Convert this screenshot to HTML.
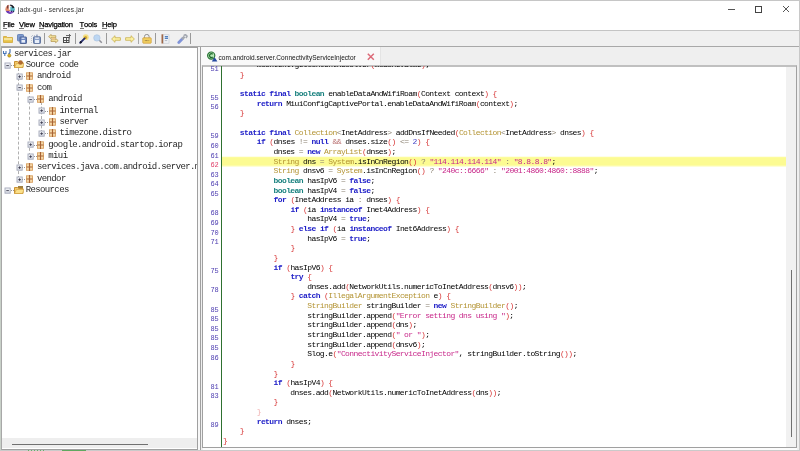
<!DOCTYPE html>
<html><head><meta charset="utf-8">
<style>
*{box-sizing:border-box}
html,body{margin:0;padding:0;width:800px;height:451px;overflow:hidden;background:#fff;position:relative}
#root{position:absolute;left:0;top:0;width:800px;height:451px;will-change:transform}
.a{position:absolute}
.sans{font-family:"Liberation Sans",sans-serif}
#title{left:18px;top:5px;font-size:6.5px;letter-spacing:0.2px;line-height:10px;color:#2a2a2a;white-space:pre}
#menu span{position:absolute;top:20px;font-size:7.6px;letter-spacing:-0.2px;line-height:10px;color:#000;white-space:pre;-webkit-text-stroke:0.25px #000}
#menu u{text-decoration:none;position:relative}
#menu u:after{content:"";position:absolute;left:0;right:0;top:8px;height:1px;background:#777}
#toolbar{left:1px;top:30px;width:798px;height:17px;background:#f0f0f0;border-top:1px solid #c4c4c4;border-bottom:1px solid #a8a8a8}
.sep{position:absolute;top:33px;width:1px;height:11px;background:#9a9a9a}
#left{left:1px;top:47px;width:197px;height:403px;border:1px solid #a0a0a0;border-left:1px solid #a8a8a8;background:#fff}
#divider{left:198px;top:47px;width:2px;height:404px;background:#f8f8f8}
#right{left:200px;top:47px;width:599px;height:404px;border-left:1px solid #a0a0a0;background:#efefef}
#editor{left:202px;top:65px;width:595px;height:383px;border:1px solid #a0a0a0;border-top:2px solid #c0c0c0;background:#fff}
#treeclip{left:0;top:0;width:197px;height:437px;overflow:hidden}
.tr{position:absolute;font-family:"Liberation Mono",monospace;font-size:9px;letter-spacing:-0.62px;line-height:0;color:#262626;white-space:pre}
.ex{position:absolute;width:6px;height:6px;border:1px solid #a8acbc;background:linear-gradient(#f4f6fa,#d8dce6)}
.ex .h{position:absolute;left:1px;top:2px;width:3px;height:1px;background:#505060}
.ex .v{position:absolute;left:2px;top:1px;width:1px;height:3px;background:#505060}
.hd{position:absolute;height:1px;border-top:1px dotted #999}
.vd{position:absolute;width:1px;border-left:1px dashed #b0b0b0}
#codeclip{left:203px;top:66px;width:583px;height:381px;overflow:hidden}
.cr{position:absolute;left:20px;height:10px;font-family:"Liberation Mono",monospace;font-size:8px;letter-spacing:-0.59px;line-height:10px;color:#000;white-space:pre}
.cr b,.cr i{font-style:normal;font-weight:normal}
.cr .k{color:#2020c8;font-weight:bold}
.cr .t{color:#18807e;font-weight:bold}
.cr .y{color:#b49434}
.cr .s{color:#c8288a}
.cr .n{color:#4848c8}
.cr .p{color:#d83a3a}
.cr .o{color:#8a8070}
.cr .aa{color:#b87070}
.cr .fb{color:#f0b0b0}
.ln{position:absolute;left:0;width:15.8px;height:10px;text-align:right;font-family:"Liberation Mono",monospace;font-size:7px;letter-spacing:0px;line-height:10px;color:#4c3cb0;white-space:pre}
.ln.cur{color:#e0406a}
</style></head>
<body><div id="root">
<!-- window edges -->
<div class="a" style="left:0;top:0;width:800px;height:1px;background:#c6c6c6"></div>
<div class="a" style="left:0;top:0;width:1px;height:451px;background:#c8d0c8"></div>
<div class="a" style="left:799px;top:0;width:1px;height:451px;background:#c8c8c8"></div>

<!-- title bar -->
<svg class="a" style="left:4px;top:3px" width="12" height="12" viewBox="0 0 12 12"><defs><clipPath id="jc"><circle cx="6.1" cy="6.2" r="4.7"/></clipPath></defs><g clip-path="url(#jc)"><rect x="0" y="0" width="12" height="12" fill="#f4f4f4"/><path d="M0 2h6.2v6H0z" fill="#e08a6a"/><path d="M6.2 4h6v4.5h-6z" fill="#58b8c4"/><path d="M0 8h12v5H0z" fill="#6a38b4"/><path d="M5.2 8h4v1.2h-4z" fill="#c8a0e0"/><path d="M6 1.2c2 0 3.8 1 4.8 3l-2 1.2C8.2 4 7.2 3 6 2.8z" fill="#1c1c24"/><path d="M3.2 1.6h1.2v4H3.2z" fill="#5a2a30"/><path d="M4.8 2.2h1.4v4.6H4.8z" fill="#fafafa"/></g><circle cx="7.6" cy="8.3" r="0.7" fill="#201060"/><circle cx="9.4" cy="8.3" r="0.7" fill="#103040"/></svg>
<div id="title" class="a sans">jadx-gui - services.jar</div>
<div class="a" style="left:728px;top:9px;width:7px;height:1px;background:#555"></div>
<div class="a" style="left:755px;top:6px;width:7px;height:7px;border:1px solid #444"></div>
<svg class="a" style="left:782px;top:5px" width="8" height="8"><path d="M1 1L7 7M7 1L1 7" stroke="#444" stroke-width="0.9"/></svg>

<!-- menu -->
<div id="menu" class="sans">
<span style="left:3px"><u>F</u>ile</span>
<span style="left:19px"><u>V</u>iew</span>
<span style="left:39px"><u>N</u>avigation</span>
<span style="left:79.5px"><u>T</u>ools</span>
<span style="left:102px"><u>H</u>elp</span>
</div>

<!-- toolbar -->
<div id="toolbar" class="a"></div>
<!-- 1 open folder -->
<svg class="a" style="left:3px;top:35px" width="10" height="8" viewBox="0 0 10 8"><path d="M0.5 1.5h3l1 1h5v5h-9z" fill="#e6c248" stroke="#d2a838" stroke-width="0.8"/><path d="M1 3h8v2.2H1z" fill="#f6e49a"/></svg>
<!-- 2 copy -->
<svg class="a" style="left:17px;top:34px" width="10" height="10" viewBox="0 0 10 10"><rect x="0.5" y="0.5" width="6" height="6.5" rx="0.8" fill="#7d9ad0" stroke="#5a78b0" stroke-width="0.8"/><rect x="3" y="3" width="6.5" height="6.5" rx="0.6" fill="#6a86c0" stroke="#4a5e90" stroke-width="0.9"/><rect x="4.5" y="6" width="3.5" height="2.6" fill="#e8eef8"/><rect x="4.6" y="3.6" width="3" height="1.4" fill="#c8d4ec"/></svg>
<!-- 3 save as -->
<svg class="a" style="left:31px;top:34px" width="10" height="10" viewBox="0 0 10 10"><path d="M0.5 9V1.5h5" stroke="#b0b8c8" stroke-width="0.8" stroke-dasharray="1 1" fill="none"/><rect x="2.5" y="2.8" width="7" height="6.6" rx="0.6" fill="#8aa0c8" stroke="#5a6e98" stroke-width="0.9"/><rect x="4" y="6" width="4" height="3" fill="#e8eef8"/><rect x="4.2" y="3.3" width="3.6" height="1.6" fill="#dfe6f4"/><path d="M6 0.5v3" stroke="#6a7ea8" stroke-width="1"/></svg>
<div class="sep" style="left:44px"></div>
<!-- 4 sync arrows -->
<svg class="a" style="left:47.5px;top:34px" width="11" height="10" viewBox="0 0 11 10"><path d="M0.6 2.6L3.2 0.4v1.3h4.6v1.8H3.2v1.3z" fill="#f6e6a0" stroke="#b09048" stroke-width="0.7"/><path d="M10.2 6.6L7.6 8.8V7.5H3v-1.8h4.6V4.4z" fill="#f6e6a0" stroke="#b09048" stroke-width="0.7"/><rect x="4" y="3.6" width="3" height="2" fill="#f0c888"/></svg>
<!-- 5 grid -->
<svg class="a" style="left:62px;top:33px" width="10" height="11" viewBox="0 0 10 11"><rect x="1.5" y="4.5" width="5.5" height="5" fill="#f4f4f4" stroke="#4a4a4a" stroke-width="1"/><path d="M4.5 4.5v5M1.5 7.5h5.5" stroke="#4a4a4a" stroke-width="0.9"/><path d="M7.5 1v4.5M4 2.5h5" stroke="#5a5a5a" stroke-width="0.9" fill="none"/></svg>
<div class="sep" style="left:75px"></div>
<!-- 6 wand -->
<svg class="a" style="left:79px;top:34px" width="10" height="10" viewBox="0 0 10 10"><circle cx="6.8" cy="3.2" r="2.9" fill="#f4dc70" opacity="0.85"/><circle cx="6.6" cy="3.4" r="1.5" fill="#d8a828"/><path d="M1.2 8.8L5.6 4.4" stroke="#283070" stroke-width="1.9" stroke-linecap="round"/><path d="M1.2 8.8L2.4 7.6" stroke="#101020" stroke-width="2"/></svg>
<!-- 7 magnifier -->
<svg class="a" style="left:93px;top:34px" width="10" height="10" viewBox="0 0 10 10"><path d="M6 6L8.8 8.8" stroke="#909098" stroke-width="1.5"/><circle cx="3.9" cy="3.9" r="3.2" fill="#bcd6f2" stroke="#a8c0dc" stroke-width="0.6"/></svg>
<div class="sep" style="left:106px"></div>
<!-- 8 left arrow -->
<svg class="a" style="left:110.5px;top:35px" width="10" height="8" viewBox="0 0 10 8"><path d="M0.6 4L4 0.7v2h5.4v2.6H4v2z" fill="#fbf0a0" stroke="#c8b050" stroke-width="0.8"/></svg>
<!-- 9 right arrow -->
<svg class="a" style="left:124.5px;top:35px" width="10" height="8" viewBox="0 0 10 8"><path d="M9.4 4L6 0.7v2H0.6v2.6H6v2z" fill="#fbf0a0" stroke="#c8b050" stroke-width="0.8"/></svg>
<div class="sep" style="left:138px;background:#a8a8a8"></div>
<!-- 10 lock -->
<svg class="a" style="left:141.5px;top:34px" width="10" height="10" viewBox="0 0 10 10"><path d="M2.5 4V2.5a2.2 2 0 0 1 4.6 0V4" stroke="#909090" stroke-width="1" fill="none"/><rect x="0.8" y="3.8" width="8.4" height="5.4" rx="0.6" fill="#f2d060" stroke="#d0a040" stroke-width="0.8"/><path d="M2.8 6.6h4.4" stroke="#7a6030" stroke-width="0.8" stroke-dasharray="0.9 0.5"/></svg>
<div class="sep" style="left:155px"></div>
<!-- 11 book -->
<svg class="a" style="left:160.5px;top:34px" width="9" height="10" viewBox="0 0 9 10"><rect x="0.5" y="0.3" width="2" height="9.2" fill="#a06848"/><rect x="2.5" y="0.8" width="5.5" height="8.4" fill="#f0f2f6" stroke="#c0c8d4" stroke-width="0.6"/><path d="M3.8 2.6h3.2M3.8 4.4h3.2" stroke="#5080c0" stroke-width="1.1"/><path d="M3.8 6.6h2.4" stroke="#a0a8b8" stroke-width="0.8"/></svg>
<!-- 12 wrench -->
<svg class="a" style="left:176.5px;top:34px" width="11" height="10" viewBox="0 0 11 10"><path d="M1.8 8.4L5.4 4.8" stroke="#8094d8" stroke-width="2.8" stroke-linecap="round"/><path d="M5 5.2L7.6 2.6" stroke="#a4a8b0" stroke-width="2.4"/><path d="M6.6 1.6l1.8-1 1.6 1.6-1 1.8" stroke="#a4a8b0" stroke-width="1.6" fill="none"/></svg>
<div class="sep" style="left:190px"></div>


<!-- left panel -->
<div id="left" class="a"></div>
<div id="divider" class="a"></div>
<div id="treeclip" class="a">
<svg width="0" height="0" style="position:absolute"><defs><linearGradient id="exg" x1="0" y1="0" x2="0" y2="1"><stop offset="0" stop-color="#f6f7fa"/><stop offset="1" stop-color="#d4d8e2"/></linearGradient></defs></svg>
<div class="vd" style="left:18.1px;top:68.0px;height:110.5px"></div>
<div class="vd" style="left:28.8px;top:91.0px;height:65.0px"></div>
<div class="vd" style="left:40.5px;top:102.0px;height:31.0px"></div>
<svg class="a" style="left:2px;top:48px" width="10" height="10" viewBox="0 0 10 10"><path d="M1.5 3v2.5h2.5V3M2.8 5.5v2.5" stroke="#4a78b8" stroke-width="1.1" fill="none"/><path d="M8 1v3.2c0 1-0.6 1.3-1.6 1.3" stroke="#3a68a8" stroke-width="1.1" fill="none"/><circle cx="7.3" cy="7.6" r="1.6" fill="#d8b020" stroke="#907010" stroke-width="0.5"/></svg>
<div class="tr" style="left:14.0px;top:53.5px">services.jar</div>
<svg class="a" style="left:3.5px;top:61.5px" width="8" height="8" viewBox="0 0 8 8"><rect x="1" y="1" width="5.2" height="5.2" fill="url(#exg)" stroke="#a4a8b8" stroke-width="0.9"/><path d="M2.3 3.6H4.9" stroke="#3c3c50" stroke-width="0.9"/></svg>
<div class="hd" style="left:10.9px;top:64.9px;width:3px"></div>
<svg class="a" style="left:13.8px;top:59.4px" width="10" height="9" viewBox="0 0 10 9"><path d="M0.5 2.5h3l1 1h4.5v5h-8.5z" fill="#f3c96a" stroke="#c89030"/><path d="M0.5 8.5l2-4h7.5l-1.5 4z" fill="#fbe08a" stroke="#d0a040" stroke-width="0.6"/><circle cx="6.5" cy="3.5" r="2.3" fill="#b06a30"/></svg>
<div class="tr" style="left:25.7px;top:64.9px">Source code</div>
<svg class="a" style="left:15.5px;top:72.5px" width="8" height="8" viewBox="0 0 8 8"><rect x="1" y="1" width="5.2" height="5.2" fill="url(#exg)" stroke="#a4a8b8" stroke-width="0.9"/><path d="M2.3 3.6H4.9 M3.6 2.3V4.9" stroke="#3c3c50" stroke-width="0.9"/></svg>
<div class="hd" style="left:22.2px;top:76.2px;width:3px"></div>
<svg class="a" style="left:26.0px;top:72.2px" width="7" height="8" viewBox="0 0 7 8"><rect x="0.5" y="0.8" width="6" height="6.5" fill="#f6d8a8" stroke="#d8a060" stroke-width="0.9"/><path d="M3.5 0V8M0.5 4H6.5" stroke="#a86434" stroke-width="1.1"/></svg>
<div class="tr" style="left:37.0px;top:76.2px">android</div>
<svg class="a" style="left:15.5px;top:83.5px" width="8" height="8" viewBox="0 0 8 8"><rect x="1" y="1" width="5.2" height="5.2" fill="url(#exg)" stroke="#a4a8b8" stroke-width="0.9"/><path d="M2.3 3.6H4.9" stroke="#3c3c50" stroke-width="0.9"/></svg>
<div class="hd" style="left:22.2px;top:87.7px;width:3px"></div>
<svg class="a" style="left:26.0px;top:83.7px" width="7" height="8" viewBox="0 0 7 8"><rect x="0.5" y="0.8" width="6" height="6.5" fill="#f6d8a8" stroke="#d8a060" stroke-width="0.9"/><path d="M3.5 0V8M0.5 4H6.5" stroke="#a86434" stroke-width="1.1"/></svg>
<div class="tr" style="left:37.0px;top:87.7px">com</div>
<svg class="a" style="left:26.5px;top:95.5px" width="8" height="8" viewBox="0 0 8 8"><rect x="1" y="1" width="5.2" height="5.2" fill="url(#exg)" stroke="#a4a8b8" stroke-width="0.9"/><path d="M2.3 3.6H4.9" stroke="#3c3c50" stroke-width="0.9"/></svg>
<div class="hd" style="left:33.5px;top:99.1px;width:3px"></div>
<svg class="a" style="left:37.3px;top:95.1px" width="7" height="8" viewBox="0 0 7 8"><rect x="0.5" y="0.8" width="6" height="6.5" fill="#f6d8a8" stroke="#d8a060" stroke-width="0.9"/><path d="M3.5 0V8M0.5 4H6.5" stroke="#a86434" stroke-width="1.1"/></svg>
<div class="tr" style="left:48.3px;top:99.1px">android</div>
<svg class="a" style="left:37.5px;top:106.5px" width="8" height="8" viewBox="0 0 8 8"><rect x="1" y="1" width="5.2" height="5.2" fill="url(#exg)" stroke="#a4a8b8" stroke-width="0.9"/><path d="M2.3 3.6H4.9 M3.6 2.3V4.9" stroke="#3c3c50" stroke-width="0.9"/></svg>
<div class="hd" style="left:44.8px;top:110.5px;width:3px"></div>
<svg class="a" style="left:48.6px;top:106.5px" width="7" height="8" viewBox="0 0 7 8"><rect x="0.5" y="0.8" width="6" height="6.5" fill="#f6d8a8" stroke="#d8a060" stroke-width="0.9"/><path d="M3.5 0V8M0.5 4H6.5" stroke="#a86434" stroke-width="1.1"/></svg>
<div class="tr" style="left:59.6px;top:110.5px">internal</div>
<svg class="a" style="left:37.5px;top:118.5px" width="8" height="8" viewBox="0 0 8 8"><rect x="1" y="1" width="5.2" height="5.2" fill="url(#exg)" stroke="#a4a8b8" stroke-width="0.9"/><path d="M2.3 3.6H4.9 M3.6 2.3V4.9" stroke="#3c3c50" stroke-width="0.9"/></svg>
<div class="hd" style="left:44.8px;top:121.9px;width:3px"></div>
<svg class="a" style="left:48.6px;top:117.9px" width="7" height="8" viewBox="0 0 7 8"><rect x="0.5" y="0.8" width="6" height="6.5" fill="#f6d8a8" stroke="#d8a060" stroke-width="0.9"/><path d="M3.5 0V8M0.5 4H6.5" stroke="#a86434" stroke-width="1.1"/></svg>
<div class="tr" style="left:59.6px;top:121.9px">server</div>
<svg class="a" style="left:37.5px;top:129.5px" width="8" height="8" viewBox="0 0 8 8"><rect x="1" y="1" width="5.2" height="5.2" fill="url(#exg)" stroke="#a4a8b8" stroke-width="0.9"/><path d="M2.3 3.6H4.9 M3.6 2.3V4.9" stroke="#3c3c50" stroke-width="0.9"/></svg>
<div class="hd" style="left:44.8px;top:133.2px;width:3px"></div>
<svg class="a" style="left:48.6px;top:129.2px" width="7" height="8" viewBox="0 0 7 8"><rect x="0.5" y="0.8" width="6" height="6.5" fill="#f6d8a8" stroke="#d8a060" stroke-width="0.9"/><path d="M3.5 0V8M0.5 4H6.5" stroke="#a86434" stroke-width="1.1"/></svg>
<div class="tr" style="left:59.6px;top:133.2px">timezone.distro</div>
<svg class="a" style="left:26.5px;top:140.5px" width="8" height="8" viewBox="0 0 8 8"><rect x="1" y="1" width="5.2" height="5.2" fill="url(#exg)" stroke="#a4a8b8" stroke-width="0.9"/><path d="M2.3 3.6H4.9 M3.6 2.3V4.9" stroke="#3c3c50" stroke-width="0.9"/></svg>
<div class="hd" style="left:33.5px;top:144.7px;width:3px"></div>
<svg class="a" style="left:37.3px;top:140.7px" width="7" height="8" viewBox="0 0 7 8"><rect x="0.5" y="0.8" width="6" height="6.5" fill="#f6d8a8" stroke="#d8a060" stroke-width="0.9"/><path d="M3.5 0V8M0.5 4H6.5" stroke="#a86434" stroke-width="1.1"/></svg>
<div class="tr" style="left:48.3px;top:144.7px">google.android.startop.iorap</div>
<svg class="a" style="left:26.5px;top:152.5px" width="8" height="8" viewBox="0 0 8 8"><rect x="1" y="1" width="5.2" height="5.2" fill="url(#exg)" stroke="#a4a8b8" stroke-width="0.9"/><path d="M2.3 3.6H4.9 M3.6 2.3V4.9" stroke="#3c3c50" stroke-width="0.9"/></svg>
<div class="hd" style="left:33.5px;top:156.1px;width:3px"></div>
<svg class="a" style="left:37.3px;top:152.1px" width="7" height="8" viewBox="0 0 7 8"><rect x="0.5" y="0.8" width="6" height="6.5" fill="#f6d8a8" stroke="#d8a060" stroke-width="0.9"/><path d="M3.5 0V8M0.5 4H6.5" stroke="#a86434" stroke-width="1.1"/></svg>
<div class="tr" style="left:48.3px;top:156.1px">miui</div>
<svg class="a" style="left:15.5px;top:163.5px" width="8" height="8" viewBox="0 0 8 8"><rect x="1" y="1" width="5.2" height="5.2" fill="url(#exg)" stroke="#a4a8b8" stroke-width="0.9"/><path d="M2.3 3.6H4.9 M3.6 2.3V4.9" stroke="#3c3c50" stroke-width="0.9"/></svg>
<div class="hd" style="left:22.2px;top:167.4px;width:3px"></div>
<svg class="a" style="left:26.0px;top:163.4px" width="7" height="8" viewBox="0 0 7 8"><rect x="0.5" y="0.8" width="6" height="6.5" fill="#f6d8a8" stroke="#d8a060" stroke-width="0.9"/><path d="M3.5 0V8M0.5 4H6.5" stroke="#a86434" stroke-width="1.1"/></svg>
<div class="tr" style="left:37.0px;top:167.4px">services.java.com.android.server.m</div>
<svg class="a" style="left:15.5px;top:175.5px" width="8" height="8" viewBox="0 0 8 8"><rect x="1" y="1" width="5.2" height="5.2" fill="url(#exg)" stroke="#a4a8b8" stroke-width="0.9"/><path d="M2.3 3.6H4.9 M3.6 2.3V4.9" stroke="#3c3c50" stroke-width="0.9"/></svg>
<div class="hd" style="left:22.2px;top:178.9px;width:3px"></div>
<svg class="a" style="left:26.0px;top:174.9px" width="7" height="8" viewBox="0 0 7 8"><rect x="0.5" y="0.8" width="6" height="6.5" fill="#f6d8a8" stroke="#d8a060" stroke-width="0.9"/><path d="M3.5 0V8M0.5 4H6.5" stroke="#a86434" stroke-width="1.1"/></svg>
<div class="tr" style="left:37.0px;top:178.9px">vendor</div>
<svg class="a" style="left:3.5px;top:186.5px" width="8" height="8" viewBox="0 0 8 8"><rect x="1" y="1" width="5.2" height="5.2" fill="url(#exg)" stroke="#a4a8b8" stroke-width="0.9"/><path d="M2.3 3.6H4.9" stroke="#3c3c50" stroke-width="0.9"/></svg>
<div class="hd" style="left:10.9px;top:190.2px;width:3px"></div>
<svg class="a" style="left:13.8px;top:184.8px" width="10" height="9" viewBox="0 0 10 9"><path d="M0.5 2.5h3l1 1h4.5v5h-8.5z" fill="#f3c96a" stroke="#c89030"/><path d="M0.5 8.5l2-4h7.5l-1.5 4z" fill="#fbe08a" stroke="#d0a040" stroke-width="0.6"/><rect x="4" y="1" width="5" height="2" fill="#a08040"/></svg>
<div class="tr" style="left:25.7px;top:190.2px">Resources</div>
</div>

<!-- right panel -->
<div id="right" class="a"></div>
<div id="editor" class="a"></div>

<!-- tab -->
<div class="a" style="left:201px;top:47px;width:180px;height:18px;background:#f9f9f9;border-right:1px solid #e4e4e4"></div>
<svg class="a" style="left:206px;top:51px" width="12" height="11" viewBox="0 0 12 11"><circle cx="5.2" cy="4.6" r="3.6" fill="#b8e8b8" stroke="#2a7436" stroke-width="1.2"/><path d="M6.7 3.2A1.9 1.9 0 1 0 6.7 6" stroke="#1e6a2a" stroke-width="1.3" fill="none"/><path d="M8.6 6.2l2.8 4.3H5.8z" fill="#2448a0"/></svg>
<div class="a sans" style="left:218.5px;top:52.5px;font-size:6.5px;letter-spacing:0.04px;line-height:10px;color:#111;white-space:pre">com.android.server.ConnectivityServiceInjector</div>
<svg class="a" style="left:366px;top:52px" width="10" height="10" viewBox="0 0 10 10"><path d="M1.8 1.8L7.8 7.8M7.8 1.8L1.8 7.8" stroke="#dc6a78" stroke-width="1.5"/></svg>
<!-- scrollbars -->
<div class="a" style="left:786px;top:67px;width:10px;height:380px;background:#f1f1f1"></div>
<div class="a" style="left:790.5px;top:270px;width:1.5px;height:167px;background:#707070"></div>
<div class="a" style="left:2px;top:438px;width:195px;height:10px;background:#eeeeee"></div>
<div class="a" style="left:12px;top:443.5px;width:136px;height:1.5px;background:#707070"></div>
<!-- bottom strip -->
<div class="a" style="left:203px;top:448px;width:594px;height:2px;background:#fcfcfc"></div><div class="a" style="left:0;top:450px;width:800px;height:1px;background:#cacaca"></div>
<div class="a" style="left:28px;top:450px;width:16px;height:1px;background:repeating-linear-gradient(90deg,#68b068 0 1px,transparent 1px 3px)"></div>
<div class="a" style="left:62px;top:450px;width:24px;height:1px;background:#60a860"></div>
<div id="codeclip" class="a">
<div class="a" style="left:19px;top:90px;width:564px;height:11px;background:linear-gradient(#fefee6 0 1px,#fdfc9c 1px 2px,#fcfb92 2px 9px,#fdfca8 9px 10px,#fefed4 10px 11px)"></div>
<div class="a" style="left:18px;top:0;width:1px;height:381px;background:#2e7030"></div>
<div class="cr" style="top:-5.66px">        mContext.getContentResolver<i class="p">(</i>mCacheValue<i class="p">)</i>;</div>
<div class="ln" style="top:-2.16px">51</div>
<div class="cr" style="top:3.97px">    <i class="p">}</i></div>
<div class="cr" style="top:13.60px"></div>
<div class="cr" style="top:23.23px">    <b class="k">static</b> <b class="k">final</b> <b class="t">boolean</b> enableDataAndWifiRoam<i class="p">(</i>Context context<i class="p">)</i> <i class="p">{</i></div>
<div class="ln" style="top:26.73px">55</div>
<div class="cr" style="top:32.86px">        <b class="k">return</b> MiuiConfigCaptivePortal.enableDataAndWifiRoam<i class="p">(</i>context<i class="p">)</i>;</div>
<div class="ln" style="top:36.36px">56</div>
<div class="cr" style="top:42.49px">    <i class="p">}</i></div>
<div class="cr" style="top:52.12px"></div>
<div class="cr" style="top:61.75px">    <b class="k">static</b> <b class="k">final</b> <i class="y">Collection</i><i class="o">&lt;</i>InetAddress<i class="o">&gt;</i> addDnsIfNeeded<i class="p">(</i><i class="y">Collection</i><i class="o">&lt;</i>InetAddress<i class="o">&gt;</i> dnses<i class="p">)</i> <i class="p">{</i></div>
<div class="ln" style="top:65.25px">59</div>
<div class="cr" style="top:71.38px">        <b class="k">if</b> <i class="p">(</i>dnses <i class="o">!=</i> <b class="k">null</b> <i class="aa">&amp;&amp;</i> dnses.size<i class="p">(</i><i class="p">)</i> <i class="o">&lt;=</i> <i class="n">2</i><i class="p">)</i> <i class="p">{</i></div>
<div class="ln" style="top:74.88px">60</div>
<div class="cr" style="top:81.01px">            dnses <i class="o">=</i> <b class="k">new</b> <i class="y">ArrayList</i><i class="p">(</i>dnses<i class="p">)</i>;</div>
<div class="ln" style="top:84.51px">61</div>
<div class="cr" style="top:90.64px">            <i class="y">String</i> dns <i class="o">=</i> <i class="y">System</i>.isInCnRegion<i class="p">(</i><i class="p">)</i> <i class="o">?</i> <i class="s">&quot;114.114.114.114&quot;</i> <i class="o">:</i> <i class="s">&quot;8.8.8.8&quot;</i>;</div>
<div class="ln cur" style="top:94.14px">62</div>
<div class="cr" style="top:100.27px">            <i class="y">String</i> dnsv6 <i class="o">=</i> <i class="y">System</i>.isInCnRegion<i class="p">(</i><i class="p">)</i> <i class="o">?</i> <i class="s">&quot;240c::6666&quot;</i> <i class="o">:</i> <i class="s">&quot;2001:4860:4860::8888&quot;</i>;</div>
<div class="ln" style="top:103.77px">63</div>
<div class="cr" style="top:109.90px">            <b class="t">boolean</b> hasIpV6 <i class="o">=</i> <b class="k">false</b>;</div>
<div class="ln" style="top:113.40px">64</div>
<div class="cr" style="top:119.53px">            <b class="t">boolean</b> hasIpV4 <i class="o">=</i> <b class="k">false</b>;</div>
<div class="ln" style="top:123.03px">65</div>
<div class="cr" style="top:129.16px">            <b class="k">for</b> <i class="p">(</i>InetAddress ia <i class="o">:</i> dnses<i class="p">)</i> <i class="p">{</i></div>
<div class="cr" style="top:138.79px">                <b class="k">if</b> <i class="p">(</i>ia <b class="k">instanceof</b> Inet4Address<i class="p">)</i> <i class="p">{</i></div>
<div class="ln" style="top:142.29px">68</div>
<div class="cr" style="top:148.42px">                    hasIpV4 <i class="o">=</i> <b class="k">true</b>;</div>
<div class="ln" style="top:151.92px">69</div>
<div class="cr" style="top:158.05px">                <i class="p">}</i> <b class="k">else</b> <b class="k">if</b> <i class="p">(</i>ia <b class="k">instanceof</b> Inet6Address<i class="p">)</i> <i class="p">{</i></div>
<div class="ln" style="top:161.55px">70</div>
<div class="cr" style="top:167.68px">                    hasIpV6 <i class="o">=</i> <b class="k">true</b>;</div>
<div class="ln" style="top:171.18px">71</div>
<div class="cr" style="top:177.31px">                <i class="p">}</i></div>
<div class="cr" style="top:186.94px">            <i class="p">}</i></div>
<div class="cr" style="top:196.57px">            <b class="k">if</b> <i class="p">(</i>hasIpV6<i class="p">)</i> <i class="p">{</i></div>
<div class="ln" style="top:200.07px">75</div>
<div class="cr" style="top:206.20px">                <b class="k">try</b> <i class="p">{</i></div>
<div class="cr" style="top:215.83px">                    dnses.add<i class="p">(</i>NetworkUtils.numericToInetAddress<i class="p">(</i>dnsv6<i class="p">)</i><i class="p">)</i>;</div>
<div class="ln" style="top:219.33px">78</div>
<div class="cr" style="top:225.46px">                <i class="p">}</i> <b class="k">catch</b> <i class="p">(</i><i class="y">IllegalArgumentException</i> e<i class="p">)</i> <i class="p">{</i></div>
<div class="cr" style="top:235.09px">                    <i class="y">StringBuilder</i> stringBuilder <i class="o">=</i> <b class="k">new</b> <i class="y">StringBuilder</i><i class="p">(</i><i class="p">)</i>;</div>
<div class="ln" style="top:238.59px">85</div>
<div class="cr" style="top:244.72px">                    stringBuilder.append<i class="p">(</i><i class="s">&quot;Error setting dns using &quot;</i><i class="p">)</i>;</div>
<div class="ln" style="top:248.22px">85</div>
<div class="cr" style="top:254.35px">                    stringBuilder.append<i class="p">(</i>dns<i class="p">)</i>;</div>
<div class="ln" style="top:257.85px">85</div>
<div class="cr" style="top:263.98px">                    stringBuilder.append<i class="p">(</i><i class="s">&quot; or &quot;</i><i class="p">)</i>;</div>
<div class="ln" style="top:267.48px">85</div>
<div class="cr" style="top:273.61px">                    stringBuilder.append<i class="p">(</i>dnsv6<i class="p">)</i>;</div>
<div class="ln" style="top:277.11px">85</div>
<div class="cr" style="top:283.24px">                    Slog.e<i class="p">(</i><i class="s">&quot;ConnectivityServiceInjector&quot;</i>, stringBuilder.toString<i class="p">(</i><i class="p">)</i><i class="p">)</i>;</div>
<div class="ln" style="top:286.74px">86</div>
<div class="cr" style="top:292.87px">                <i class="p">}</i></div>
<div class="cr" style="top:302.50px">            <i class="p">}</i></div>
<div class="cr" style="top:312.13px">            <b class="k">if</b> <i class="p">(</i>hasIpV4<i class="p">)</i> <i class="p">{</i></div>
<div class="ln" style="top:315.63px">81</div>
<div class="cr" style="top:321.76px">                dnses.add<i class="p">(</i>NetworkUtils.numericToInetAddress<i class="p">(</i>dns<i class="p">)</i><i class="p">)</i>;</div>
<div class="ln" style="top:325.26px">83</div>
<div class="cr" style="top:331.39px">            <i class="p">}</i></div>
<div class="cr" style="top:341.02px">        <i class="p fb">}</i></div>
<div class="cr" style="top:350.65px">        <b class="k">return</b> dnses;</div>
<div class="ln" style="top:354.15px">89</div>
<div class="cr" style="top:360.28px">    <i class="p">}</i></div>
<div class="cr" style="top:369.91px"><i class="p">}</i></div>

</div>

</div></body></html>
